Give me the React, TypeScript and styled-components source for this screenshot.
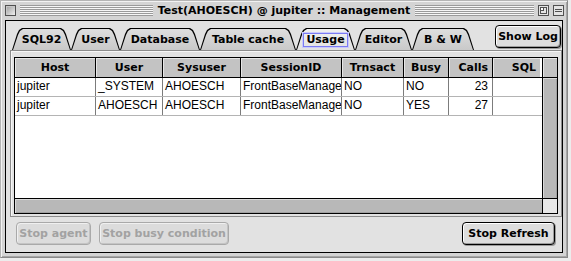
import React from "react";
import styled, { createGlobalStyle } from "styled-components";

const SYS = `"DejaVu Sans", "Liberation Sans", sans-serif`;
const CELL = `"Liberation Sans", Arial, sans-serif`;

const GlobalStyle = createGlobalStyle`
  html, body {
    margin: 0;
    padding: 0;
    background: #ececec;
  }
  body {
    font-family: ${CELL};
  }
`;

const Window = styled.div`
  width: 568px;
  height: 258px;
  box-sizing: border-box;
  border: 1px solid #8a8a8a;
  border-top-color: #b4b4b4;
  border-left-color: #b4b4b4;
  background: #d4d4d4;
  box-shadow: inset 1px 1px 0 #f2f2f2, inset -1px -1px 0 #a6a6a6;
  display: flex;
  flex-direction: column;
`;

const TitleBar = styled.div`
  height: 19px;
  flex: none;
  display: grid;
  grid-template-columns: 1fr auto 1fr;
  align-items: center;
  padding: 0 3px 0 3px;
`;

const TitleSide = styled.div`
  display: flex;
  align-items: center;
  gap: 4px;
`;

const Stripes = styled.div`
  flex: 1;
  height: 11px;
  background: repeating-linear-gradient(
    to bottom,
    #9a9a9a 0 1px,
    #f6f6f6 1px 2px
  );
`;

const Title = styled.div`
  font: bold 11px ${SYS};
  color: #000;
  padding: 0 5px;
  white-space: nowrap;
`;

const CloseBox = styled.div`
  width: 11px;
  height: 11px;
  box-sizing: border-box;
  margin-left: 1px;
  border: 1px solid #505050;
  background: linear-gradient(135deg, #9c9c9c, #f0f0f0);
  box-shadow: inset 1px 1px 0 #c8c8c8;
`;

const WidgetBox = styled.svg`
  width: 11px;
  height: 11px;
  display: block;
  flex: none;
`;

const Content = styled.div`
  flex: 1;
  margin: 0 4px 4px 4px;
  border: 1px solid #000;
  background: #e2e2e2;
  display: flex;
  flex-direction: column;
`;

const TabStrip = styled.div`
  height: 29px;
  flex: none;
  display: flex;
  align-items: flex-end;
  padding-left: 6px;
`;

const TAB_SHAPE = `polygon(0 100%, 5px 6px, 7px 2px, 10px 0, calc(100% - 10px) 0, calc(100% - 7px) 2px, calc(100% - 5px) 6px, 100% 100%)`;

const Tab = styled.div<{ $w: number; $active?: boolean }>`
  position: relative;
  z-index: ${(p) => (p.$active ? 2 : 1)};
  width: ${(p) => p.$w}px;
  height: 22px;
  flex: none;
  display: flex;
  align-items: center;
  justify-content: center;
  padding-top: 1px;
  box-sizing: border-box;
  font: bold 11px ${SYS};
  color: #000;
  white-space: nowrap;

  &::before,
  &::after {
    content: "";
    position: absolute;
    z-index: -1;
    clip-path: ${TAB_SHAPE};
  }
  &::before {
    inset: 0;
    background: #000;
  }
  &::after {
    inset: 1px 1px 0 1px;
    background: ${(p) =>
      p.$active
        ? "linear-gradient(#f0f0f0, #e2e2e2)"
        : "linear-gradient(#dedede, #c9c9c9)"};
  }
`;

const Focus = styled.span`
  padding: 0 2px;
  border: 1px solid #7b7bf4;
  box-shadow: 0 0 0 1px #c9c9fb;
  line-height: 12px;
`;

const Button = styled.div<{ $w: number; $disabled?: boolean }>`
  width: ${(p) => p.$w}px;
  height: 23px;
  box-sizing: border-box;
  flex: none;
  display: flex;
  align-items: center;
  justify-content: center;
  border: 1px solid ${(p) => (p.$disabled ? "#a9a9a9" : "#000")};
  border-radius: 4px;
  background: ${(p) => (p.$disabled ? "#dcdcdc" : "#dddddd")};
  box-shadow: ${(p) =>
    p.$disabled
      ? "inset 1px 1px 0 #f0f0f0, inset -1px -1px 0 #c4c4c4"
      : "inset 1px 1px 0 #fff, inset -1px -1px 0 #9c9c9c, 1px 1px 0 #9a9a9a"};
  font: bold 11px ${SYS};
  color: ${(p) => (p.$disabled ? "#a2a2a2" : "#000")};
  white-space: nowrap;
`;

const ShowLog = styled(Button)`
  align-self: flex-start;
  margin: 4px 1px 0 auto;
`;

const Panel = styled.div`
  margin-left: 4px;
  height: 167px;
  box-sizing: border-box;
  flex: none;
  border: 1px solid #8c8c8c;
  box-shadow: inset 1px 1px 0 #f6f6f6;
  padding: 6px 3px 2px 3px;
`;

const Table = styled.div`
  height: 157px;
  box-sizing: border-box;
  border: 1px solid #000;
  background: #fff;
  display: grid;
  grid-template-columns: 1fr 15px;
  grid-template-rows: 1fr 15px;
`;

const COLS = "81px 67px 78px 101px 62px 45px 44px 47px";

const DataArea = styled.div`
  overflow: hidden;
`;

const Row = styled.div<{ $head?: boolean }>`
  display: grid;
  grid-template-columns: ${COLS};
  height: ${(p) => (p.$head ? 20 : 19)}px;
  box-sizing: border-box;
  border-bottom: 1px solid ${(p) => (p.$head ? "#000" : "#b4b4b4")};
`;

const HeadCell = styled.div<{ $align?: string; $last?: boolean }>`
  background: #c3c3c3;
  box-shadow: inset 1px 1px 0 #e6e6e6;
  border-right: ${(p) => (p.$last ? "none" : "1px solid #000")};
  font: bold 11px ${SYS};
  color: #000;
  line-height: 19px;
  text-align: ${(p) => p.$align || "center"};
  padding: 0 4px;
  overflow: hidden;
  white-space: nowrap;
`;

const Cell = styled.div<{ $align?: string; $last?: boolean }>`
  border-right: ${(p) => (p.$last ? "none" : "1px solid #7c7c7c")};
  font: 12px ${CELL};
  color: #000;
  line-height: 17px;
  text-align: ${(p) => p.$align || "left"};
  padding: 0 4px 0 2px;
  overflow: hidden;
  white-space: nowrap;
`;

const VScroll = styled.div`
  border-left: 1px solid #000;
  display: flex;
  flex-direction: column;
`;

const ScrollHead = styled.div`
  height: 20px;
  flex: none;
  box-sizing: border-box;
  background: #c3c3c3;
  box-shadow: inset 1px 1px 0 #e6e6e6;
  border-bottom: 1px solid #000;
`;

const Track = styled.div`
  flex: 1;
  background: #b8b8b8;
  box-shadow: inset 1px 1px 0 #dadada, inset -1px 0 0 #a0a0a0;
`;

const HScroll = styled.div`
  border-top: 1px solid #000;
  background: #b8b8b8;
  box-shadow: inset 1px 1px 0 #dadada, inset 0 -1px 0 #a0a0a0;
`;

const Corner = styled.div`
  border-top: 1px solid #000;
  border-left: 1px solid #000;
  background-color: #f4f4f4;
  background-image: radial-gradient(#d8d8d8 0.6px, transparent 0.8px);
  background-size: 2px 2px;
`;

const ButtonRow = styled.div`
  display: flex;
  align-items: center;
  margin-top: 5px;
  padding: 0 7px 0 10px;
  gap: 8px;
`;

const Spacer = styled.div`
  flex: 1;
`;

type Col = { title: string; head?: string; cell?: string };

const columns: Col[] = [
  { title: "Host" },
  { title: "User" },
  { title: "Sysuser" },
  { title: "SessionID" },
  { title: "Trnsact" },
  { title: "Busy" },
  { title: "Calls", head: "right", cell: "right" },
  { title: "SQL", head: "right" },
];

const rows = [
  ["jupiter", "_SYSTEM", "AHOESCH", "FrontBaseManager", "NO", "NO", "23", ""],
  ["jupiter", "AHOESCH", "AHOESCH", "FrontBaseManager", "NO", "YES", "27", ""],
];

const tabs = [
  { label: "SQL92", w: 59 },
  { label: "User", w: 49 },
  { label: "Database", w: 80 },
  { label: "Table cache", w: 96 },
  { label: "Usage", w: 59, active: true },
  { label: "Editor", w: 57 },
  { label: "B & W", w: 62 },
];

export default function App() {
  return (
    <>
      <GlobalStyle />
      <Window>
        <TitleBar>
          <TitleSide>
            <CloseBox />
            <Stripes />
          </TitleSide>
          <Title>Test(AHOESCH) @ jupiter :: Management</Title>
          <TitleSide>
            <Stripes />
            <WidgetBox viewBox="0 0 11 11">
              <rect x="0.5" y="0.5" width="10" height="10" fill="#e4e4e4" stroke="#505050" />
              <rect x="2.5" y="2.5" width="6" height="6" fill="none" stroke="#505050" />
              <rect x="2.5" y="2.5" width="3" height="3" fill="#fff" stroke="#505050" />
            </WidgetBox>
            <WidgetBox viewBox="0 0 11 11">
              <rect x="0.5" y="0.5" width="10" height="10" fill="#e4e4e4" stroke="#505050" />
              <line x1="2" y1="4.5" x2="9" y2="4.5" stroke="#505050" />
              <line x1="2" y1="6.5" x2="9" y2="6.5" stroke="#505050" />
            </WidgetBox>
          </TitleSide>
        </TitleBar>
        <Content>
          <TabStrip>
            {tabs.map((t) => (
              <Tab key={t.label} $w={t.w} $active={t.active}>
                {t.active ? <Focus>{t.label}</Focus> : t.label}
              </Tab>
            ))}
            <ShowLog $w={66}>Show Log</ShowLog>
          </TabStrip>
          <Panel>
            <Table>
              <DataArea>
                <Row $head>
                  {columns.map((c, i) => (
                    <HeadCell key={c.title} $align={c.head} $last={i === columns.length - 1}>
                      {c.title}
                    </HeadCell>
                  ))}
                </Row>
                {rows.map((r, ri) => (
                  <Row key={ri}>
                    {r.map((v, i) => (
                      <Cell key={i} $align={columns[i].cell} $last={i === r.length - 1}>
                        {v}
                      </Cell>
                    ))}
                  </Row>
                ))}
              </DataArea>
              <VScroll>
                <ScrollHead />
                <Track />
              </VScroll>
              <HScroll />
              <Corner />
            </Table>
          </Panel>
          <ButtonRow>
            <Button $w={75} $disabled>
              Stop agent
            </Button>
            <Button $w={130} $disabled>
              Stop busy condition
            </Button>
            <Spacer />
            <Button $w={93}>Stop Refresh</Button>
          </ButtonRow>
        </Content>
      </Window>
    </>
  );
}
